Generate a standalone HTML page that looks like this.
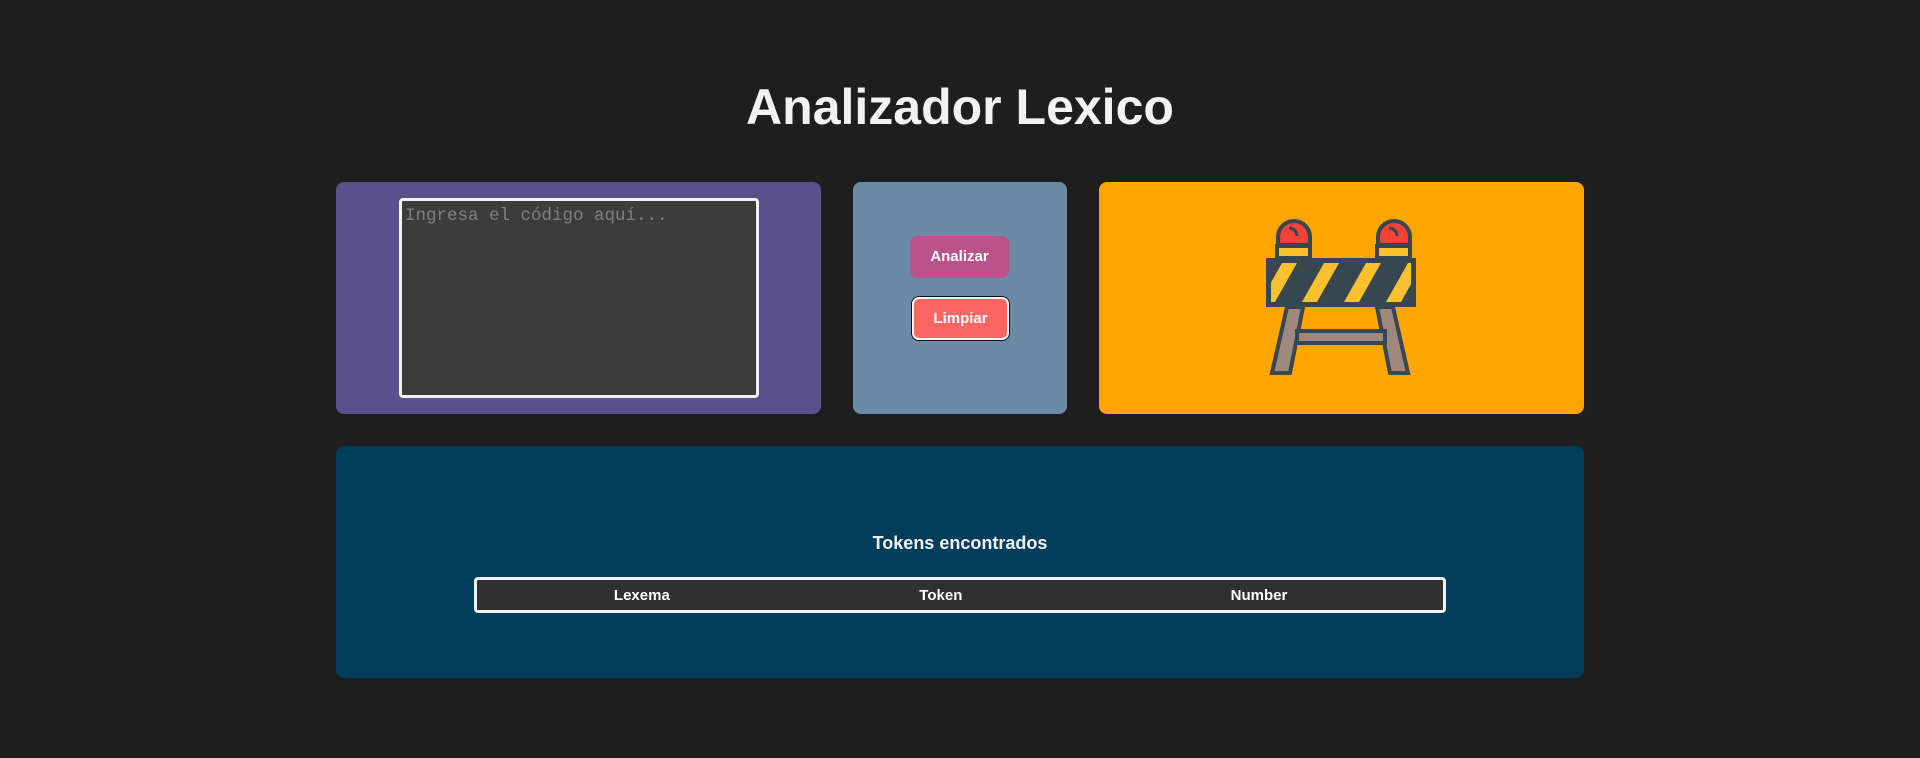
<!DOCTYPE html>
<html><head><meta charset="utf-8"><style>
*{margin:0;padding:0;box-sizing:border-box}
body{width:1920px;height:758px;background:#1e1e1e;font-family:"Liberation Sans",sans-serif;position:relative;overflow:hidden;color:#f2f2f2}
h1{position:absolute;left:0;width:1920px;top:78px;text-align:center;font-size:50px;font-weight:bold;letter-spacing:0px}
.p{position:absolute;border-radius:8px}
.ta{position:absolute;left:399px;top:198px;width:360px;height:200px;background:#3c3c3c;border:3px solid #f0f4f0;border-radius:4px;font-family:"Liberation Mono",monospace;font-size:17.5px;color:#808080;padding:5px 3px}
.btn{position:absolute;border-radius:7px;color:#fff;font-weight:bold;font-size:15px;text-align:center}
th{font-size:15px}
</style></head><body>
<h1>Analizador Lexico</h1>
<div class="p" style="left:336px;top:182px;width:485px;height:232px;background:#5a518c"></div>
<div class="ta">Ingresa el código aquí...</div>
<div class="p" style="left:853px;top:182px;width:214px;height:232px;background:#6b8aa5"></div>
<div class="btn" style="left:910px;top:236px;width:99px;height:42px;line-height:42px;background:#bc528b">Analizar</div>
<div class="btn" style="left:912px;top:297px;width:97px;height:43px;line-height:39px;background:#ff6663;border:2px solid #fff;box-shadow:0 0 0 1px #111">Limpiar</div>
<div class="p" style="left:1099px;top:182px;width:485px;height:232px;background:#ffa500"></div>
<svg style="position:absolute;left:1240px;top:210px" width="200" height="170" viewBox="0 0 200 170">
<g stroke="#37474f" stroke-width="4" stroke-linejoin="miter">
<path d="M38 35 V27 A16 16 0 0 1 70 27 V35 Z" fill="#f44336"/>
<path d="M138 35 V27 A16 16 0 0 1 170 27 V35 Z" fill="#f44336"/>
<rect x="37" y="36" width="33" height="12" fill="#fbc02d"/>
<rect x="137" y="36" width="33" height="12" fill="#fbc02d"/>
<path d="M47 97 L32 163 H50 L63 97 Z" fill="#a1887f"/>
<path d="M153 97 L168 163 H150 L137 97 Z" fill="#a1887f"/>
<rect x="57" y="121" width="88" height="12" fill="#a1887f"/>
</g>
<rect x="26" y="48" width="150" height="49" fill="#37474f"/>
<clipPath id="c"><rect x="31" y="53" width="140" height="39"/></clipPath>
<g clip-path="url(#c)" fill="#fbc02d">
<path d="M20 92 L42 53 H57 L35 92Z"/><path d="M62 92 L84 53 H99 L77 92Z"/><path d="M104 92 L126 53 H141 L119 92Z"/><path d="M146 92 L168 53 H183 L161 92Z"/><path d="M-22 92 L0 53 H15 L-7 92Z"/>
</g>
<path d="M49 18 a8 8 0 0 1 8 8" stroke="#37474f" stroke-width="3" fill="none"/>
<path d="M149 18 a8 8 0 0 1 8 8" stroke="#37474f" stroke-width="3" fill="none"/>
</svg>
<div class="p" style="left:336px;top:446px;width:1248px;height:232px;background:#003d5b"></div>
<div style="position:absolute;left:336px;width:1248px;top:533px;text-align:center;font-weight:bold;font-size:18px">Tokens encontrados</div>
<table style="position:absolute;left:474px;top:577px;width:972px;height:36px;background:#303030;border:3px solid #f0f0f0;border-radius:4px;border-collapse:separate;color:#fff">
<tr><th style="width:34%">Lexema</th><th style="width:28%">Token</th><th>Number</th></tr></table>
</body></html>
